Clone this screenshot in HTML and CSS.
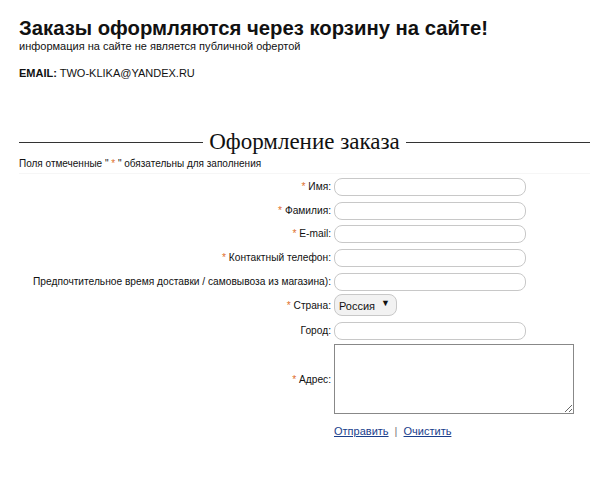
FILE: index.html
```html
<!DOCTYPE html>
<html lang="ru">
<head>
    <meta charset="UTF-8">
    <title>Оформление заказа</title>
    <link rel="stylesheet" href="styles.css">
</head>
<body>
    <h1>Заказы оформляются через корзину на сайте!</h1>
    <div class="note">информация на сайте не является публичной офертой</div>
    <div class="email"><b>EMAIL:</b> TWO-KLIKA@YANDEX.RU</div>

    <div class="legend">Оформление заказа</div>
    <div class="required-note">Поля отмеченные " <span class="star">*</span> " обязательны для заполнения</div>

    <form class="order-form">
        <label class="label"><span class="star">*</span> Имя:</label>
        <input type="text" class="field">

        <label class="label"><span class="star">*</span> Фамилия:</label>
        <input type="text" class="field">

        <label class="label"><span class="star">*</span> E-mail:</label>
        <input type="text" class="field">

        <label class="label"><span class="star">*</span> Контактный телефон:</label>
        <input type="text" class="field">

        <label class="label">Предпочтительное время доставки / самовывоза из магазина):</label>
        <input type="text" class="field">

        <label class="label"><span class="star">*</span> Страна:</label>
        <div class="select">Россия <span class="arrow">&#9660;</span></div>

        <label class="label">Город:</label>
        <input type="text" class="field">

        <label class="label"><span class="star">*</span> Адрес:</label>
        <textarea class="area"></textarea>

        <div></div>
        <div class="actions">
            <a href="#">Отправить</a> <span class="sep">|</span> <a href="#">Очистить</a>
        </div>
    </form>
</body>
</html>
```

FILE: styles.css
```css
body {
    margin: 0;
    padding: 16px 5px 0 19px;
    font-family: 'Liberation Sans', Arial, sans-serif;
    font-size: 11px;
    color: #111;
    background: #fff;
}

h1 {
    margin: 0;
    font-size: 20.3px;
    font-weight: bold;
    line-height: 24px;
    color: #111;
}

.note {
    line-height: 13px;
}

.email {
    margin-top: 14px;
    line-height: 13px;
}

.legend {
    display: flex;
    align-items: center;
    gap: 6px;
    margin-top: 50px;
    font-family: 'Liberation Serif', 'Times New Roman', serif;
    font-size: 23px;
    line-height: 24px;
    color: #111;
}

.legend::before,
.legend::after {
    content: '';
    flex: 1;
    border-top: 1px solid #333;
}

.required-note {
    margin-top: 4px;
    font-size: 10px;
    line-height: 12px;
}

.star {
    color: #e0702c;
}

.order-form {
    display: grid;
    grid-template-columns: 312px 1fr;
    column-gap: 3px;
    row-gap: 5.7px;
    align-items: center;
    margin-top: 3px;
    padding-top: 4px;
    border-top: 1px solid #f6f6f6;
}

.label {
    justify-self: end;
    white-space: nowrap;
    text-align: right;
    font-size: 10.2px;
    line-height: 12px;
}

.field {
    box-sizing: border-box;
    width: 192px;
    height: 18px;
    margin: 0;
    border: 1px solid #c8c8c8;
    border-radius: 8px;
    background: #fff;
}

.select {
    box-sizing: border-box;
    width: 63px;
    height: 22px;
    margin-top: -2px;
    padding: 5px 0 0 4px;
    border: 1px solid #c8c8c8;
    border-radius: 8px;
    background: #f2f2f2;
    font-size: 11px;
    position: relative;
}

.arrow {
    position: absolute;
    right: 6px;
    top: 3px;
    font-size: 9px;
}

.area {
    box-sizing: border-box;
    width: 240px;
    height: 70px;
    margin: 0;
    margin-top: -2px;
    border: 1px solid #888;
    resize: both;
}

.actions {
    margin-top: 5px;
    font-size: 11px;
}

.actions a {
    color: #1a3e8c;
}

.sep {
    color: #777;
    margin: 0 3px;
}
```
